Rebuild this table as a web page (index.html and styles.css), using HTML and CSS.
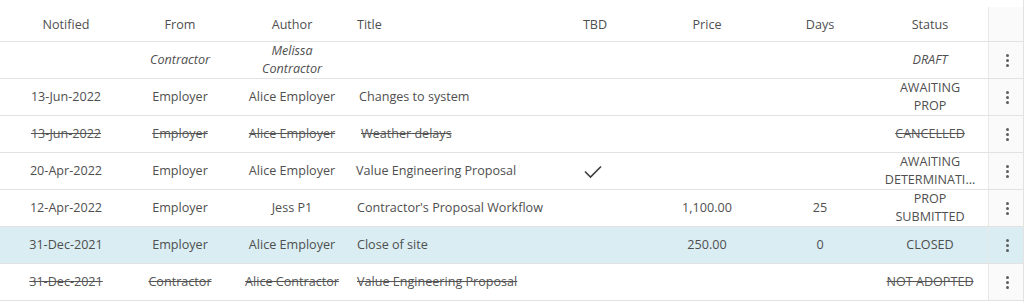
FILE: index.html
```html
<!DOCTYPE html>
<html>
<head>
<meta charset="utf-8">
<link rel="stylesheet" href="styles.css">
</head>
<body>
<div class="wrap">
  <div class="grid">
    <div class="row head">
      <div class="c ctr">Notified</div>
      <div class="c ctr">From</div>
      <div class="c ctr">Author</div>
      <div class="c title">Title</div>
      <div class="c ctr">TBD</div>
      <div class="c ctr">Price</div>
      <div class="c ctr">Days</div>
      <div class="c ctr status">Status</div>
      <div class="c act"></div>
    </div>

    <div class="row draft">
      <div class="c ctr"></div>
      <div class="c ctr">Contractor</div>
      <div class="c ctr author">Melissa Contractor</div>
      <div class="c title"></div>
      <div class="c ctr"></div>
      <div class="c ctr"></div>
      <div class="c ctr"></div>
      <div class="c ctr status">DRAFT</div>
      <div class="c act"><span class="kebab"><i></i><i></i><i></i></span></div>
    </div>

    <div class="row">
      <div class="c ctr">13-Jun-2022</div>
      <div class="c ctr">Employer</div>
      <div class="c ctr author">Alice Employer</div>
      <div class="c title t2">Changes to system</div>
      <div class="c ctr"></div>
      <div class="c ctr"></div>
      <div class="c ctr"></div>
      <div class="c ctr status">AWAITING PROP</div>
      <div class="c act"><span class="kebab"><i></i><i></i><i></i></span></div>
    </div>

    <div class="row struck">
      <div class="c ctr"><s>13-Jun-2022</s></div>
      <div class="c ctr"><s>Employer</s></div>
      <div class="c ctr author"><s>Alice Employer</s></div>
      <div class="c title t5"><s>Weather delays</s></div>
      <div class="c ctr"></div>
      <div class="c ctr"></div>
      <div class="c ctr"></div>
      <div class="c ctr status"><s>CANCELLED</s></div>
      <div class="c act"><span class="kebab"><i></i><i></i><i></i></span></div>
    </div>

    <div class="row">
      <div class="c ctr">20-Apr-2022</div>
      <div class="c ctr">Employer</div>
      <div class="c ctr author">Alice Employer</div>
      <div class="c title t0">Value Engineering Proposal</div>
      <div class="c ctr"><svg class="check" width="18" height="14" viewBox="0 0 18 14"><path d="M1 6.5 L6.5 12 L17 1.5" fill="none" stroke="#3d3d3d" stroke-width="1.6"/></svg></div>
      <div class="c ctr"></div>
      <div class="c ctr"></div>
      <div class="c ctr status">AWAITING DETERMINATI…</div>
      <div class="c act"><span class="kebab"><i></i><i></i><i></i></span></div>
    </div>

    <div class="row">
      <div class="c ctr">12-Apr-2022</div>
      <div class="c ctr">Employer</div>
      <div class="c ctr author">Jess P1</div>
      <div class="c title">Contractor's Proposal Workflow</div>
      <div class="c ctr"></div>
      <div class="c ctr">1,100.00</div>
      <div class="c ctr">25</div>
      <div class="c ctr status">PROP SUBMITTED</div>
      <div class="c act"><span class="kebab"><i></i><i></i><i></i></span></div>
    </div>

    <div class="row sel">
      <div class="c ctr">31-Dec-2021</div>
      <div class="c ctr">Employer</div>
      <div class="c ctr author">Alice Employer</div>
      <div class="c title">Close of site</div>
      <div class="c ctr"></div>
      <div class="c ctr">250.00</div>
      <div class="c ctr">0</div>
      <div class="c ctr status">CLOSED</div>
      <div class="c act"><span class="kebab"><i></i><i></i><i></i></span></div>
    </div>

    <div class="row struck">
      <div class="c ctr"><s>31-Dec-2021</s></div>
      <div class="c ctr"><s>Contractor</s></div>
      <div class="c ctr author"><s>Alice Contractor</s></div>
      <div class="c title"><s>Value Engineering Proposal</s></div>
      <div class="c ctr"></div>
      <div class="c ctr"></div>
      <div class="c ctr"></div>
      <div class="c ctr status"><s>NOT ADOPTED</s></div>
      <div class="c act"><span class="kebab"><i></i><i></i><i></i></span></div>
    </div>
  </div>
</div>
</body>
</html>
```

FILE: styles.css
```css
html, body {
  margin: 0;
  padding: 0;
  background: #ffffff;
}

body {
  font-family: "Open Sans", "Noto Sans", sans-serif;
  font-size: 12.6px;
  color: #4f4f4f;
}

.wrap {
  width: 1024px;
  height: 302px;
  border-right: 1px solid #e3e3e3;
  padding-top: 7px;
  box-sizing: border-box;
  overflow: hidden;
}

.row {
  display: grid;
  grid-template-columns: 132px 96px 128px 189px 100px 124px 102px 117px 36px;
  height: 37px;
  border-bottom: 1px solid #e2e2e2;
  box-sizing: border-box;
}

.row.head {
  height: 35px;
}

.c {
  display: flex;
  align-items: center;
  line-height: 18px;
  min-width: 0;
}

.ctr {
  justify-content: center;
  text-align: center;
}

.title {
  justify-content: flex-start;
  padding-left: 1px;
  white-space: nowrap;
}

.title.t2 { padding-left: 3px; }
.title.t5 { padding-left: 5px; }
.title.t0 { padding-left: 0; }

.author {
  padding: 0 16px;
}

.status {
  padding: 0 12px 0 13px;
}

.head .c {
  padding-top: 1px;
}

.draft .c {
  font-style: italic;
}

.struck s {
  text-decoration: line-through;
  color: #555;
}

.sel {
  background: #d9edf3;
}

.act {
  justify-content: center;
  background: #fafafa;
  border-left: 1px solid #e8e8e8;
}

.sel .act {
  background: #d9edf3;
}

.kebab {
  display: flex;
  flex-direction: column;
  gap: 2px;
  margin-left: 1px;
}

.kebab i {
  display: block;
  width: 3px;
  height: 3px;
  border-radius: 50%;
  background: #5e5e5e;
}

.check {
  margin-left: -4px;
  margin-top: 2px;
}
```
